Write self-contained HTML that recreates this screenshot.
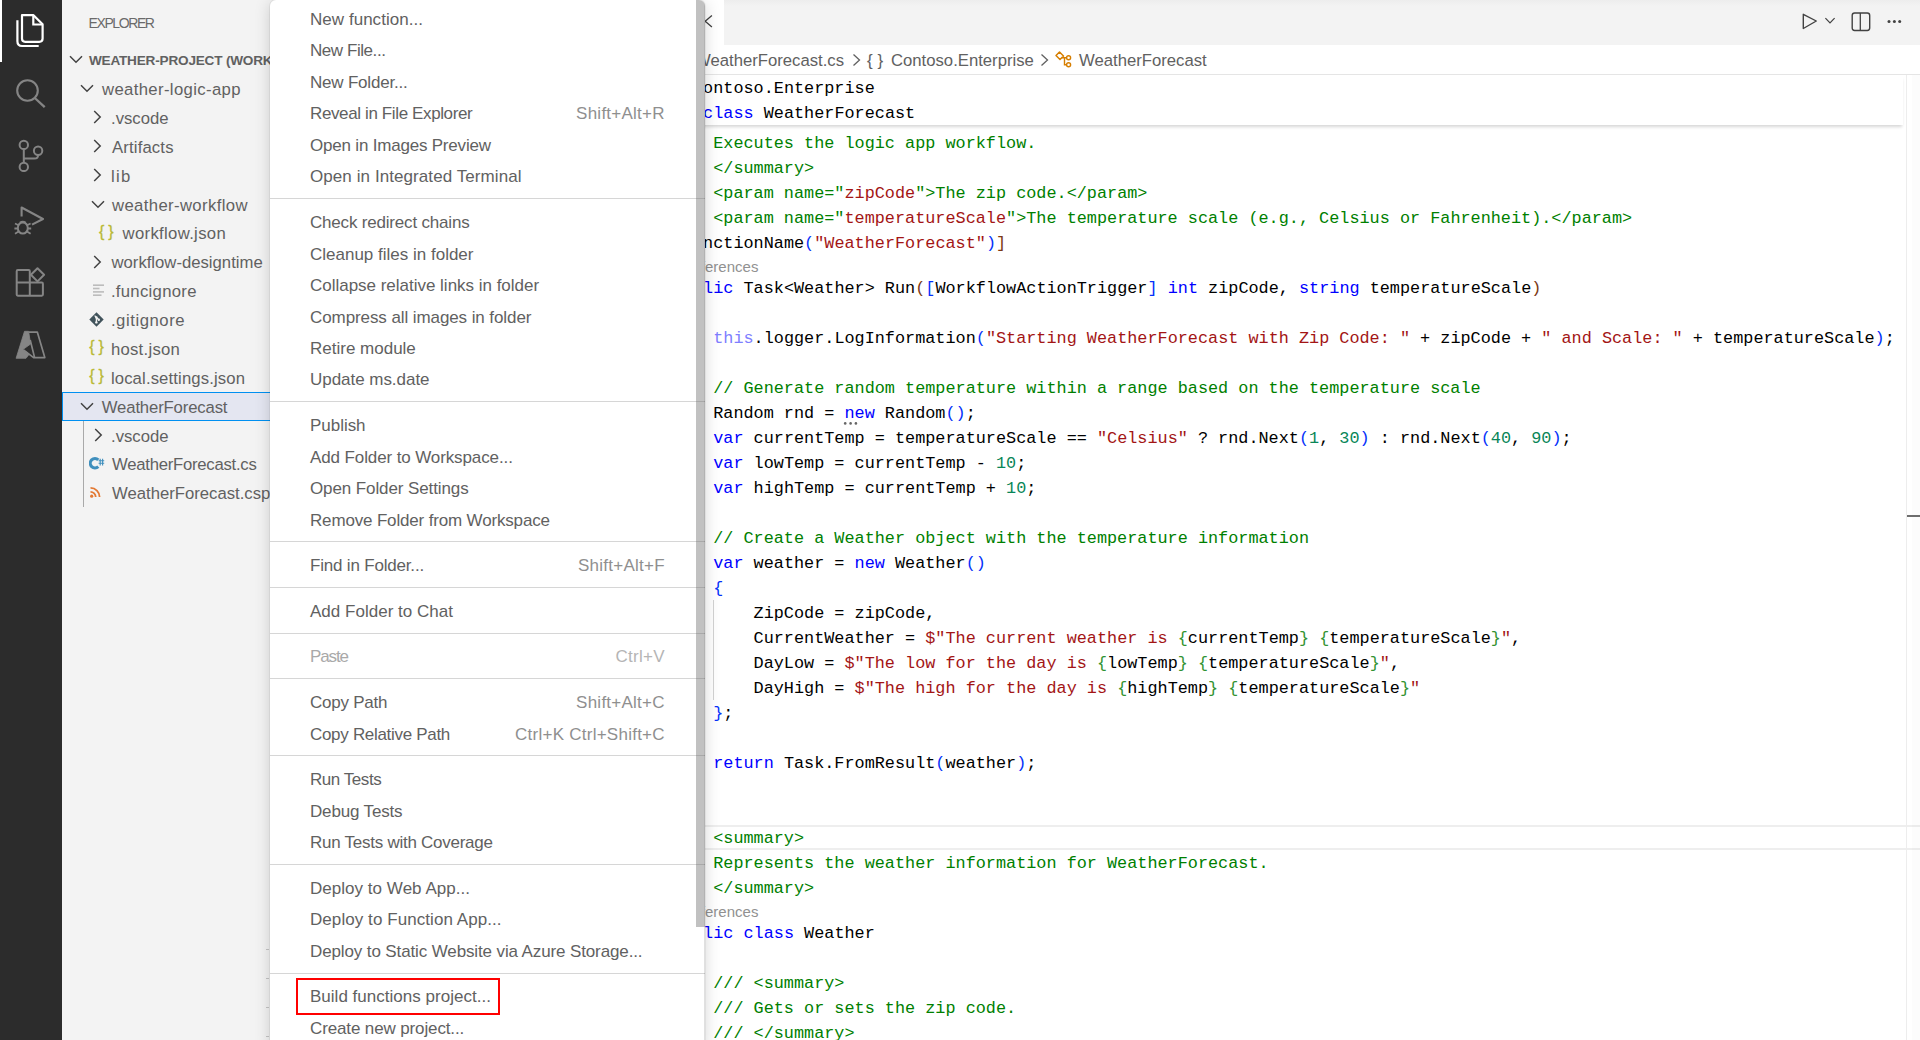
<!DOCTYPE html>
<html><head><meta charset="utf-8">
<style>
html,body{margin:0;padding:0;width:1920px;height:1040px;overflow:hidden;background:#fff;font-family:"Liberation Sans",sans-serif;}
.abs{position:absolute}
#act{position:absolute;left:0;top:0;width:62px;height:1040px;background:#2c2c2c}
#side{position:absolute;left:0;top:0;width:562px;height:1040px;background:#f3f3f3;overflow:hidden}
#side .row{position:absolute;height:28.875px;line-height:28.875px;font-size:16.7px;color:#616161;white-space:nowrap;padding-top:2px}
#side .root{font-weight:bold;font-size:13.6px;letter-spacing:-0.2px}
#side .sel{position:absolute;left:62px;width:600px;box-sizing:border-box;border:1px solid #0090f1;background:#e4e6f1}
#side .json{position:absolute;color:#b9b935;font-size:16px;line-height:23px;letter-spacing:-0.3px;white-space:pre;-webkit-text-stroke:0.3px #b9b935}
#side .abs svg, .chev{display:block}
#title{position:absolute;left:88.5px;top:0.5px;height:45px;line-height:45px;font-size:14px;color:#6a6a6a;letter-spacing:-1.4px}
#tabs{position:absolute;left:560px;top:0;width:1360px;height:45px;background:linear-gradient(#ededed,#f3f3f3 6px)}
#tab{position:absolute;left:560px;top:0;width:164px;height:45px;background:#fff}
#crumbs{position:absolute;left:560px;top:45px;width:1360px;height:29px;background:#fff;border-bottom:1px solid #e5e5e5}
.cr{position:absolute;top:46px;height:29px;line-height:29px;font-size:16.7px;color:#616161;white-space:nowrap}
#editor{position:absolute;left:560px;top:75px;width:1360px;height:965px;background:#fff;overflow:hidden}
.ln{position:absolute;left:592px;height:25px;line-height:25px;font-family:"Liberation Mono",monospace;font-size:16.833px;white-space:pre;color:#000}
#codewrap{position:absolute;left:0;top:0;width:1920px;height:1040px;overflow:hidden}
.k{color:#0000ff}.c{color:#008000}.s{color:#a31515}.n{color:#098658}.t{color:#000}
.b1{color:#0431fa}.b2{color:#319331}.b3{color:#7b3814}.f{color:#7f7fff}
#sticky{position:absolute;left:560px;top:75px;width:1343px;height:50px;background:#fff;box-shadow:0 3px 3px -1px rgba(0,0,0,0.16)}
.lens{position:absolute;font-size:15px;color:#919191;white-space:nowrap;height:20px;line-height:20px}
#ruler{position:absolute;left:1906px;top:75px;width:1px;height:965px;background:#ededed}
#menu{position:absolute;left:270px;top:0;width:435px;height:1050px;background:#fff;border-radius:6px;box-shadow:0 0 0 1px rgba(0,0,0,0.05),0 2px 16px rgba(0,0,0,0.17);overflow:hidden}
#menu .mi{position:absolute;left:40px;height:20px;line-height:20px;font-size:17px;color:#616161;white-space:nowrap}
#menu .ms{position:absolute;right:40.2px;height:20px;line-height:20px;font-size:17px;color:#8f8f8f;white-space:nowrap;letter-spacing:0.25px}
#menu .dis{color:#a9a9a9}
#menu .ms.dis{color:#b5b5b5}
#menu .sep{position:absolute;left:0;width:435px;height:1px;background:#d6d6d6}
#mscroll{position:absolute;left:426px;top:0;width:8px;height:927px;background:rgba(100,100,100,0.4)}
#mborder{position:absolute;left:434px;top:0;width:1px;height:1050px;background:linear-gradient(rgba(0,0,0,0.3) 927px,rgba(0,0,0,0.12) 927px)}
#redbox{position:absolute;left:296px;top:978px;width:204px;height:37px;box-sizing:border-box;border:2px solid #ff0000}
</style></head><body>
<div id="side">
  <div id="title">EXPLORER</div>
  <div class="abs" style="left:68.8px;top:55.14px"><svg class="chev" width="14" height="9" viewBox="0 0 14 9"><path d="M1 1.2 L7 7.2 L13 1.2" fill="none" stroke="#424242" stroke-width="1.5"/></svg></div>
<div class="row root" style="left:88.9px;top:45.20px">WEATHER-PROJECT (WORKSPACE)</div>
<div class="abs" style="left:80.4px;top:84.01px"><svg class="chev" width="14" height="9" viewBox="0 0 14 9"><path d="M1 1.2 L7 7.2 L13 1.2" fill="none" stroke="#424242" stroke-width="1.5"/></svg></div>
<div class="row" style="left:102px;top:74.08px;letter-spacing:0.363px">weather-logic-app</div>
<div class="abs" style="left:92.5px;top:110.39px"><svg class="chev" width="9" height="14" viewBox="0 0 9 14"><path d="M1.2 1 L7.2 7 L1.2 13" fill="none" stroke="#424242" stroke-width="1.5"/></svg></div>
<div class="row" style="left:111.0px;top:102.95px;letter-spacing:0.000px">.vscode</div>
<div class="abs" style="left:92.5px;top:139.26px"><svg class="chev" width="9" height="14" viewBox="0 0 9 14"><path d="M1.2 1 L7.2 7 L1.2 13" fill="none" stroke="#424242" stroke-width="1.5"/></svg></div>
<div class="row" style="left:112.0px;top:131.82px;letter-spacing:0.150px">Artifacts</div>
<div class="abs" style="left:92.5px;top:168.14px"><svg class="chev" width="9" height="14" viewBox="0 0 9 14"><path d="M1.2 1 L7.2 7 L1.2 13" fill="none" stroke="#424242" stroke-width="1.5"/></svg></div>
<div class="row" style="left:111.0px;top:160.70px;letter-spacing:1.300px">lib</div>
<div class="abs" style="left:90.8px;top:199.51px"><svg class="chev" width="14" height="9" viewBox="0 0 14 9"><path d="M1 1.2 L7 7.2 L13 1.2" fill="none" stroke="#424242" stroke-width="1.5"/></svg></div>
<div class="row" style="left:112.0px;top:189.57px;letter-spacing:0.373px">weather-workflow</div>
<div class="json" style="left:99.1px;top:219.89px">{ }</div>
<div class="row" style="left:122.5px;top:218.45px;letter-spacing:0.333px">workflow.json</div>
<div class="abs" style="left:92.5px;top:254.76px"><svg class="chev" width="9" height="14" viewBox="0 0 9 14"><path d="M1.2 1 L7.2 7 L1.2 13" fill="none" stroke="#424242" stroke-width="1.5"/></svg></div>
<div class="row" style="left:111.5px;top:247.32px;letter-spacing:0.000px">workflow-designtime</div>
<svg class="abs" style="left:92.7px;top:284.14px" width="12" height="13" viewBox="0 0 12 13"><rect x="0" y="0.4" width="11" height="1.6" fill="#bcbcbc"/><rect x="0" y="3.7" width="6.5" height="1.6" fill="#bcbcbc"/><rect x="0" y="7.1" width="11" height="1.6" fill="#bcbcbc"/><rect x="0" y="10.4" width="8.5" height="1.6" fill="#bcbcbc"/></svg>
<div class="row" style="left:110.9px;top:276.20px;letter-spacing:0.300px">.funcignore</div>
<svg class="abs" style="left:89px;top:312.01px" width="15" height="15" viewBox="0 0 15 15"><path d="M7.5 0.3 L14.7 7.5 L7.5 14.7 L0.3 7.5 Z" fill="#41535b"/><path d="M5.6 3.6 L9.8 7.8 M7.4 5.4 L7.4 11" stroke="#f3f3f3" stroke-width="1.3" fill="none"/><circle cx="7.4" cy="5.4" r="1.2" fill="#f3f3f3"/><circle cx="9.8" cy="7.8" r="1.2" fill="#f3f3f3"/><circle cx="7.4" cy="10.4" r="1.2" fill="#f3f3f3"/></svg>
<div class="row" style="left:110.9px;top:305.07px;letter-spacing:0.556px">.gitignore</div>
<div class="json" style="left:89.3px;top:335.39px">{ }</div>
<div class="row" style="left:110.9px;top:333.95px;letter-spacing:0.275px">host.json</div>
<div class="json" style="left:89.3px;top:364.26px">{ }</div>
<div class="row" style="left:110.9px;top:362.82px;letter-spacing:0.133px">local.settings.json</div>
<div class="sel" style="top:391.70px;height:28.88px"></div>
<div class="abs" style="left:80.0px;top:401.64px"><svg class="chev" width="14" height="9" viewBox="0 0 14 9"><path d="M1 1.2 L7 7.2 L13 1.2" fill="none" stroke="#424242" stroke-width="1.5"/></svg></div>
<div class="row" style="left:101.8px;top:391.70px;letter-spacing:-0.143px">WeatherForecast</div>
<div class="abs" style="left:93.5px;top:428.01px"><svg class="chev" width="9" height="14" viewBox="0 0 9 14"><path d="M1.2 1 L7.2 7 L1.2 13" fill="none" stroke="#424242" stroke-width="1.5"/></svg></div>
<div class="row" style="left:111.0px;top:420.57px;letter-spacing:0.000px">.vscode</div>
<svg class="abs" style="left:88.7px;top:456.39px" width="16" height="15" viewBox="0 0 16 15"><path d="M9.3 3.9 A4.7 4.7 0 1 0 9.3 10.6" fill="none" stroke="#3f8fbd" stroke-width="3.1"/><path d="M11.2 2.8 V9.4 M13.6 2.8 V9.4 M9.6 4.8 H15.2 M9.6 7.3 H15.2" stroke="#3f8fbd" stroke-width="1.1"/></svg>
<div class="row" style="left:112.0px;top:449.45px;letter-spacing:-0.247px">WeatherForecast.cs</div>
<svg class="abs" style="left:90.4px;top:487.26px" width="12" height="11" viewBox="0 0 12 11"><circle cx="1.7" cy="9.2" r="1.6" fill="#e37933"/><path d="M0.5 4.8 A5.2 5.2 0 0 1 5.7 10" fill="none" stroke="#e37933" stroke-width="1.8"/><path d="M0.5 0.9 A9.1 9.1 0 0 1 9.6 10" fill="none" stroke="#e37933" stroke-width="1.8"/></svg>
<div class="row" style="left:112.0px;top:478.32px;letter-spacing:0.000px">WeatherForecast.csproj</div>
<div class="abs" style="left:83px;top:420.57px;width:1px;height:86.62px;background:#a9a9a9"></div>
</div>
<div id="act">
  <div class="abs" style="left:0;top:0;width:2px;height:62px;background:#fff"></div>
  <!-- files -->
  <svg class="abs" style="left:14px;top:12px" width="32" height="36" viewBox="0 0 32 36">
    <path d="M8 3.2 H19.5 L28.6 12.3 V26.5 Q28.6 29.8 25.3 29.8 H11.2 Q8 29.8 8 26.5 Z" fill="none" stroke="#fff" stroke-width="2.2" stroke-linejoin="round"/>
    <path d="M19.3 3.2 V12.5 H28.6" fill="none" stroke="#fff" stroke-width="2.2"/>
    <path d="M3.4 8.2 V29.3 Q3.4 34 8.1 34 H24.7" fill="none" stroke="#fff" stroke-width="2.2"/>
  </svg>
  <!-- search -->
  <svg class="abs" style="left:14px;top:76px" width="34" height="34" viewBox="0 0 34 34">
    <circle cx="13.5" cy="14.5" r="10.3" fill="none" stroke="#858585" stroke-width="2.1"/>
    <path d="M20.8 22 L30.7 31.2" stroke="#858585" stroke-width="2.3"/>
  </svg>
  <!-- scm -->
  <svg class="abs" style="left:14px;top:136px" width="34" height="36" viewBox="0 0 34 36">
    <circle cx="9.8" cy="8.9" r="4.2" fill="none" stroke="#858585" stroke-width="2"/>
    <circle cx="24.1" cy="14.8" r="4.2" fill="none" stroke="#858585" stroke-width="2"/>
    <circle cx="9.8" cy="30.9" r="4.2" fill="none" stroke="#858585" stroke-width="2"/>
    <path d="M9.8 13.1 V26.7 M24.1 19 Q24.1 22.6 20.5 22.6 H9.8" fill="none" stroke="#858585" stroke-width="2"/>
  </svg>
  <!-- debug -->
  <svg class="abs" style="left:12px;top:200px" width="36" height="36" viewBox="0 0 36 36">
    <path d="M9.6 16.6 V7.5 L31 19 L20 24.6" fill="none" stroke="#858585" stroke-width="2.1" stroke-linejoin="round"/>
    <ellipse cx="10.8" cy="28" rx="5" ry="5.6" fill="none" stroke="#858585" stroke-width="2"/>
    <path d="M3 23.5 L6.6 25.3 M2.4 28.5 H5.7 M3 33.8 L6.6 31.6 M18.6 23.5 L15 25.3 M19.2 28.5 H15.9 M18.6 33.8 L15 31.6 M7.8 22.8 Q10.8 20.4 13.8 22.8" fill="none" stroke="#858585" stroke-width="1.8"/>
  </svg>
  <!-- extensions -->
  <svg class="abs" style="left:14px;top:266px" width="34" height="34" viewBox="0 0 34 34">
    <path d="M2.7 5.2 Q2.7 4.1 3.8 4.1 H14.7 Q15.8 4.1 15.8 5.2 V16.6 H27.8 Q28.9 16.6 28.9 17.7 V28.6 Q28.9 29.7 27.8 29.7 H3.8 Q2.7 29.7 2.7 28.6 Z M2.7 16.6 H15.8 V29.7" fill="none" stroke="#858585" stroke-width="2" stroke-linejoin="round"/>
    <path d="M23.5 2.2 L30.1 8.8 L23.5 15.4 L16.9 8.8 Z" fill="none" stroke="#858585" stroke-width="2" stroke-linejoin="round"/>
  </svg>
  <!-- azure -->
  <svg class="abs" style="left:14px;top:328px" width="34" height="34" viewBox="0 0 34 34">
    <path d="M10.5 3.3 L14.6 3.3 L16.6 16 L8.9 21.5 L15.2 26.2 L12 30.3 L2.1 30.3 Z" fill="#858585" stroke="#858585" stroke-width="0.8" stroke-linejoin="round"/>
    <path d="M14.6 4.1 L23.3 4.1 L30.8 29.6 L19.6 29.6 L9.5 21.8 M16.2 12 L20.6 29.6" fill="none" stroke="#858585" stroke-width="1.7" stroke-linejoin="round"/>
  </svg>
</div>
<div class="abs" style="left:266px;top:949px;width:3px;height:1px;background:#c4c4c4"></div>
<div class="abs" style="left:266px;top:978px;width:3px;height:1px;background:#c4c4c4"></div>
<div class="abs" style="left:266px;top:1007px;width:3px;height:1px;background:#c4c4c4"></div>
<div class="abs" style="left:266px;top:1036px;width:3px;height:1px;background:#c4c4c4"></div>
<div id="tabs"></div>
<div id="tab"></div>
<svg class="abs" style="left:697px;top:14px" width="16" height="15" viewBox="0 0 16 15"><path d="M1.5 1.6 L14.9 13.1 M14.9 1.6 L1.5 13.1" stroke="#424242" stroke-width="1.3"/></svg>
<!-- editor actions -->
<svg class="abs" style="left:1800px;top:11px" width="40" height="22" viewBox="0 0 40 22">
  <path d="M3.3 3.3 L16.3 10 L3.3 17.5 Z" fill="none" stroke="#424242" stroke-width="1.4" stroke-linejoin="round"/>
  <path d="M25.4 7.2 L30 11.9 L34.6 7.2" fill="none" stroke="#424242" stroke-width="1.2"/>
</svg>
<svg class="abs" style="left:1849px;top:10px" width="24" height="24" viewBox="0 0 24 24">
  <rect x="3.2" y="3" width="17.5" height="17.5" rx="2.4" fill="none" stroke="#424242" stroke-width="1.4"/>
  <path d="M11.3 3 V20.5" stroke="#424242" stroke-width="1.3"/>
</svg>
<svg class="abs" style="left:1884px;top:18px" width="20" height="8" viewBox="0 0 20 8">
  <circle cx="5" cy="3.6" r="1.5" fill="#424242"/><circle cx="10.4" cy="3.6" r="1.5" fill="#424242"/><circle cx="15.7" cy="3.6" r="1.5" fill="#424242"/>
</svg>
<div id="crumbs"></div>
<div class="cr" style="left:695px">WeatherForecast.cs</div>
<svg class="abs" style="left:851px;top:52px" width="12" height="16" viewBox="0 0 12 16"><path d="M2.5 2.5 L8.5 8 L2.5 13.5" fill="none" stroke="#616161" stroke-width="1.3"/></svg>
<div class="cr" style="left:867px;font-size:17px;white-space:pre">{ }</div>
<div class="cr" style="left:891px">Contoso.Enterprise</div>
<svg class="abs" style="left:1039px;top:52px" width="12" height="16" viewBox="0 0 12 16"><path d="M2.5 2.5 L8.5 8 L2.5 13.5" fill="none" stroke="#616161" stroke-width="1.3"/></svg>
<svg class="abs" style="left:1054px;top:50px" width="20" height="20" viewBox="0 0 20 20">
  <path d="M2 5.5 L5.5 2 L9.5 6 L6 9.5 Z" fill="none" stroke="#d67e00" stroke-width="1.5" stroke-linejoin="round"/>
  <path d="M7.8 7.8 H12.5 M10.5 7.8 V14.8 H12.8" fill="none" stroke="#d67e00" stroke-width="1.4"/>
  <circle cx="14.6" cy="7.8" r="2" fill="none" stroke="#d67e00" stroke-width="1.4"/>
  <circle cx="14.6" cy="14.8" r="2" fill="none" stroke="#d67e00" stroke-width="1.4"/>
</svg>
<div class="cr" style="left:1079px">WeatherForecast</div>
<div id="codewrap">
  <!-- indent guide -->
  <div class="abs" style="left:713px;top:600px;width:1px;height:100px;background:#d3d3d3"></div>
  <!-- current line highlight -->
  <div class="abs" style="left:560px;top:825px;width:1360px;height:25px;box-sizing:border-box;border-top:2px solid #eeeeee;border-bottom:2px solid #eeeeee"></div>
  <div class="ln" style="top:131.00px"><span class="c">        /// Executes the logic app workflow.</span></div>
<div class="ln" style="top:156.00px"><span class="c">        /// &lt;/summary&gt;</span></div>
<div class="ln" style="top:181.00px"><span class="c">        /// &lt;param name=&quot;</span><span class="s">zipCode</span><span class="c">&quot;&gt;The zip code.&lt;/param&gt;</span></div>
<div class="ln" style="top:206.00px"><span class="c">        /// &lt;param name=&quot;</span><span class="s">temperatureScale</span><span class="c">&quot;&gt;The temperature scale (e.g., Celsius or Fahrenheit).&lt;/param&gt;</span></div>
<div class="ln" style="top:231.00px"><span class="t">        </span><span class="b3">[</span><span class="t">FunctionName</span><span class="b1">(</span><span class="s">&quot;WeatherForecast&quot;</span><span class="b1">)</span><span class="b3">]</span></div>
<div class="ln" style="top:276.00px"><span class="t">        </span><span class="k">public</span><span class="t"> Task&lt;Weather&gt; Run</span><span class="b3">(</span><span class="b1">[</span><span class="t">WorkflowActionTrigger</span><span class="b1">]</span><span class="t"> </span><span class="k">int</span><span class="t"> zipCode, </span><span class="k">string</span><span class="t"> temperatureScale</span><span class="b3">)</span></div>
<div class="ln" style="top:301.00px"><span class="t">        </span><span class="b3">{</span></div>
<div class="ln" style="top:326.00px"><span class="t">            </span><span class="f">this</span><span class="t">.logger.LogInformation</span><span class="b1">(</span><span class="s">&quot;Starting WeatherForecast with Zip Code: &quot;</span><span class="t"> + zipCode + </span><span class="s">&quot; and Scale: &quot;</span><span class="t"> + temperatureScale</span><span class="b1">)</span><span class="t">;</span></div>
<div class="ln" style="top:376.00px"><span class="c">            // Generate random temperature within a range based on the temperature scale</span></div>
<div class="ln" style="top:401.00px"><span class="t">            Random rnd = </span><span class="k">new</span><span class="t"> Random</span><span class="b1">()</span><span class="t">;</span></div>
<div class="ln" style="top:426.00px"><span class="t">            </span><span class="k">var</span><span class="t"> currentTemp = temperatureScale == </span><span class="s">&quot;Celsius&quot;</span><span class="t"> ? rnd.Next</span><span class="b1">(</span><span class="n">1</span><span class="t">, </span><span class="n">30</span><span class="b1">)</span><span class="t"> : rnd.Next</span><span class="b1">(</span><span class="n">40</span><span class="t">, </span><span class="n">90</span><span class="b1">)</span><span class="t">;</span></div>
<div class="ln" style="top:451.00px"><span class="t">            </span><span class="k">var</span><span class="t"> lowTemp = currentTemp - </span><span class="n">10</span><span class="t">;</span></div>
<div class="ln" style="top:476.00px"><span class="t">            </span><span class="k">var</span><span class="t"> highTemp = currentTemp + </span><span class="n">10</span><span class="t">;</span></div>
<div class="ln" style="top:526.00px"><span class="c">            // Create a Weather object with the temperature information</span></div>
<div class="ln" style="top:551.00px"><span class="t">            </span><span class="k">var</span><span class="t"> weather = </span><span class="k">new</span><span class="t"> Weather</span><span class="b1">()</span></div>
<div class="ln" style="top:576.00px"><span class="t">            </span><span class="b1">{</span></div>
<div class="ln" style="top:601.00px"><span class="t">                ZipCode = zipCode,</span></div>
<div class="ln" style="top:626.00px"><span class="t">                CurrentWeather = </span><span class="s">$&quot;The current weather is </span><span class="b2">{</span><span class="t">currentTemp</span><span class="b2">}</span><span class="s"> </span><span class="b2">{</span><span class="t">temperatureScale</span><span class="b2">}</span><span class="s">&quot;</span><span class="t">,</span></div>
<div class="ln" style="top:651.00px"><span class="t">                DayLow = </span><span class="s">$&quot;The low for the day is </span><span class="b2">{</span><span class="t">lowTemp</span><span class="b2">}</span><span class="s"> </span><span class="b2">{</span><span class="t">temperatureScale</span><span class="b2">}</span><span class="s">&quot;</span><span class="t">,</span></div>
<div class="ln" style="top:676.00px"><span class="t">                DayHigh = </span><span class="s">$&quot;The high for the day is </span><span class="b2">{</span><span class="t">highTemp</span><span class="b2">}</span><span class="s"> </span><span class="b2">{</span><span class="t">temperatureScale</span><span class="b2">}</span><span class="s">&quot;</span></div>
<div class="ln" style="top:701.00px"><span class="t">            </span><span class="b1">}</span><span class="t">;</span></div>
<div class="ln" style="top:751.00px"><span class="t">            </span><span class="k">return</span><span class="t"> Task.FromResult</span><span class="b1">(</span><span class="t">weather</span><span class="b1">)</span><span class="t">;</span></div>
<div class="ln" style="top:776.00px"><span class="t">        </span><span class="b3">}</span></div>
<div class="ln" style="top:826.00px"><span class="c">        /// &lt;summary&gt;</span></div>
<div class="ln" style="top:851.00px"><span class="c">        /// Represents the weather information for WeatherForecast.</span></div>
<div class="ln" style="top:876.00px"><span class="c">        /// &lt;/summary&gt;</span></div>
<div class="ln" style="top:921.00px"><span class="t">        </span><span class="k">public</span><span class="t"> </span><span class="k">class</span><span class="t"> Weather</span></div>
<div class="ln" style="top:946.00px"><span class="t">        </span><span class="b2">{</span></div>
<div class="ln" style="top:971.00px"><span class="c">            /// &lt;summary&gt;</span></div>
<div class="ln" style="top:996.00px"><span class="c">            /// Gets or sets the zip code.</span></div>
<div class="ln" style="top:1021.00px"><span class="c">            /// &lt;/summary&gt;</span></div>
  <div class="lens" style="left:675px;top:257px">0 references</div>
  <div class="lens" style="left:675px;top:902px">0 references</div>
  <svg class="abs" style="left:843px;top:421px" width="16" height="5" viewBox="0 0 16 5"><circle cx="2.2" cy="2.4" r="1.3" fill="#666"/><circle cx="7.6" cy="2.4" r="1.3" fill="#666"/><circle cx="12.9" cy="2.4" r="1.3" fill="#666"/></svg>
</div>
<div id="sticky">
</div>
<div style="position:absolute;left:0;top:0;width:1903px;height:125px;overflow:hidden"><div class="ln" style="top:76.00px"><span class="k">namespace</span><span class="t"> Contoso.Enterprise</span></div>
<div class="ln" style="top:101.00px"><span class="t">    </span><span class="k">public</span><span class="t"> </span><span class="k">class</span><span class="t"> WeatherForecast</span></div></div>
<div class="abs" style="left:1912px;top:75px;width:8px;height:965px;background:rgba(0,0,0,0.012)"></div><div id="ruler"></div>
<div class="abs" style="left:1907px;top:515px;width:13px;height:2px;background:#6e6e6e"></div>
<div id="menu">
  <div class="mi" style="top:9.95px;letter-spacing:0.036px">New function...</div>
<div class="mi" style="top:41.44px;letter-spacing:-0.440px">New File...</div>
<div class="mi" style="top:72.93px;letter-spacing:-0.208px">New Folder...</div>
<div class="mi" style="top:104.42px;letter-spacing:-0.377px">Reveal in File Explorer</div>
<div class="ms" style="top:104.42px">Shift+Alt+R</div>
<div class="mi" style="top:135.91px;letter-spacing:-0.200px">Open in Images Preview</div>
<div class="mi" style="top:167.40px;letter-spacing:0.077px">Open in Integrated Terminal</div>
<div class="sep" style="top:198.10px"></div>
<div class="mi" style="top:213.03px;letter-spacing:-0.190px">Check redirect chains</div>
<div class="mi" style="top:244.52px;letter-spacing:0.000px">Cleanup files in folder</div>
<div class="mi" style="top:276.01px;letter-spacing:-0.016px">Collapse relative links in folder</div>
<div class="mi" style="top:307.50px;letter-spacing:-0.089px">Compress all images in folder</div>
<div class="mi" style="top:338.99px;letter-spacing:0.000px">Retire module</div>
<div class="mi" style="top:370.48px;letter-spacing:-0.038px">Update ms.date</div>
<div class="sep" style="top:401.18px"></div>
<div class="mi" style="top:416.11px;letter-spacing:-0.033px">Publish</div>
<div class="mi" style="top:447.60px;letter-spacing:-0.112px">Add Folder to Workspace...</div>
<div class="mi" style="top:479.09px;letter-spacing:-0.105px">Open Folder Settings</div>
<div class="mi" style="top:510.58px;letter-spacing:-0.163px">Remove Folder from Workspace</div>
<div class="sep" style="top:541.28px"></div>
<div class="mi" style="top:556.21px;letter-spacing:-0.188px">Find in Folder...</div>
<div class="ms" style="top:556.21px">Shift+Alt+F</div>
<div class="sep" style="top:586.91px"></div>
<div class="mi" style="top:601.84px;letter-spacing:0.018px">Add Folder to Chat</div>
<div class="sep" style="top:632.54px"></div>
<div class="mi dis" style="top:647.47px;letter-spacing:-1.125px">Paste</div>
<div class="ms dis" style="top:647.47px">Ctrl+V</div>
<div class="sep" style="top:678.17px"></div>
<div class="mi" style="top:693.10px;letter-spacing:-0.250px">Copy Path</div>
<div class="ms" style="top:693.10px">Shift+Alt+C</div>
<div class="mi" style="top:724.59px;letter-spacing:-0.306px">Copy Relative Path</div>
<div class="ms" style="top:724.59px">Ctrl+K Ctrl+Shift+C</div>
<div class="sep" style="top:755.29px"></div>
<div class="mi" style="top:770.22px;letter-spacing:-0.450px">Run Tests</div>
<div class="mi" style="top:801.71px;letter-spacing:-0.160px">Debug Tests</div>
<div class="mi" style="top:833.20px;letter-spacing:-0.259px">Run Tests with Coverage</div>
<div class="sep" style="top:863.90px"></div>
<div class="mi" style="top:878.83px;letter-spacing:0.032px">Deploy to Web App...</div>
<div class="mi" style="top:910.32px;letter-spacing:0.067px">Deploy to Function App...</div>
<div class="mi" style="top:941.81px;letter-spacing:-0.123px">Deploy to Static Website via Azure Storage...</div>
<div class="sep" style="top:972.51px"></div>
<div class="mi" style="top:987.44px;letter-spacing:0.016px">Build functions project...</div>
<div class="mi" style="top:1018.93px;letter-spacing:-0.130px">Create new project...</div>
  <div id="mscroll"></div><div id="mborder"></div>
</div>
<div id="redbox"></div>
</body></html>
